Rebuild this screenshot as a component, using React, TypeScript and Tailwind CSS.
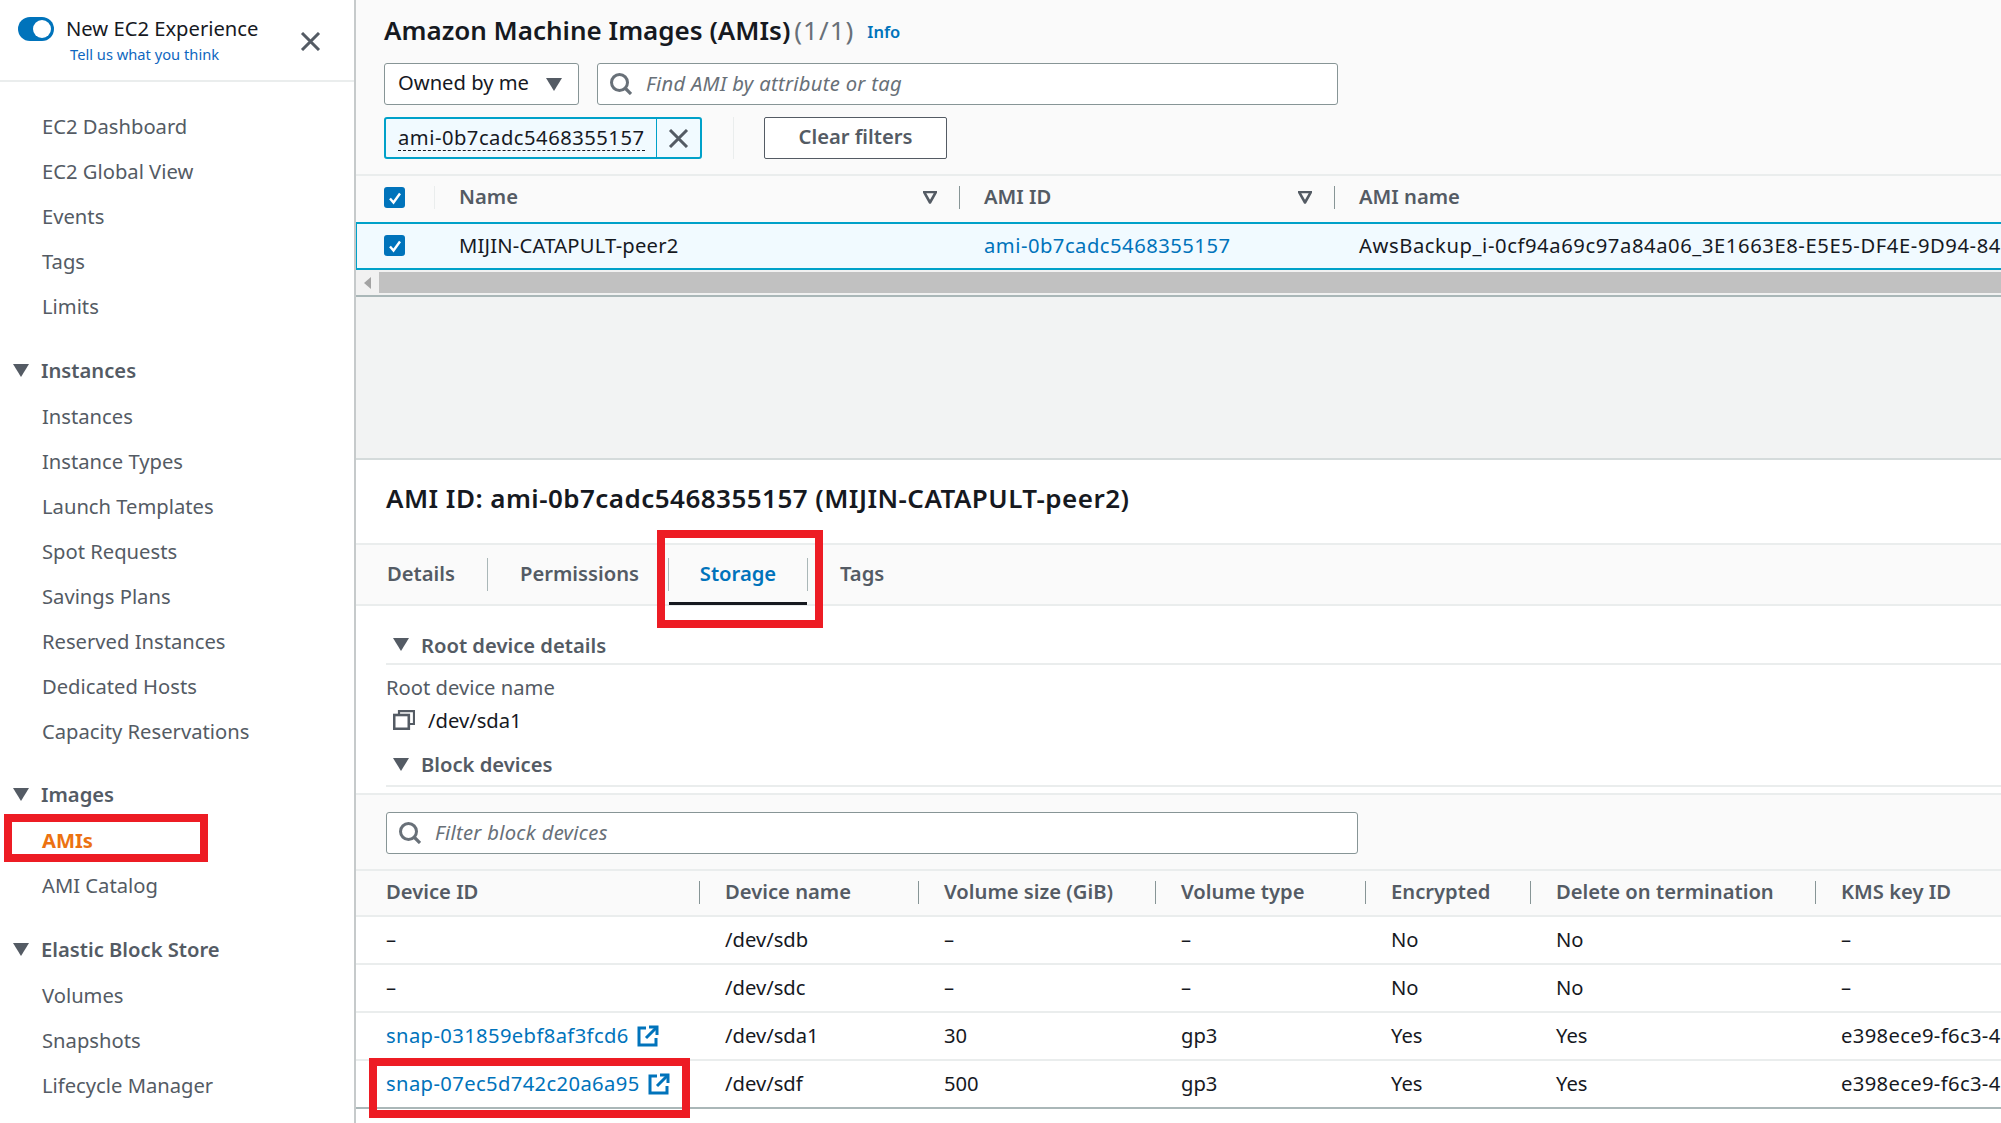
import React from "react";

const Tri = ({ className = "" }: { className?: string }) => (
  <svg viewBox="0 0 16 13" className={`w-4 h-[13px] shrink-0 ${className}`}>
    <path d="M0 0H16L8 13Z" fill="#545b64" />
  </svg>
);

const SortTri = () => (
  <svg viewBox="0 0 14 13" className="w-[14px] h-[13px] shrink-0">
    <path d="M1 1H13L7 11.5Z" fill="none" stroke="#545b64" strokeWidth="2.6" strokeLinejoin="round" />
  </svg>
);

const Search = ({ className = "" }: { className?: string }) => (
  <svg viewBox="0 0 22 22" className={`w-[22px] h-[22px] shrink-0 ${className}`}>
    <circle cx="9.5" cy="9.5" r="8" fill="none" stroke="#687078" strokeWidth="3" />
    <path d="M15 15L21 21" stroke="#687078" strokeWidth="3.2" />
  </svg>
);

const Close = ({ color = "#545b64", className = "" }: { color?: string; className?: string }) => (
  <svg viewBox="0 0 21 19" className={`w-[21px] h-[19px] shrink-0 ${className}`}>
    <path d="M2 1L19 18M19 1L2 18" stroke={color} strokeWidth="3" />
  </svg>
);

const Check = () => (
  <span className="w-[21px] h-[21px] rounded-[3px] bg-[#0073bb] flex items-center justify-center shrink-0">
    <svg viewBox="0 0 14 14" className="w-[14px] h-[14px]">
      <path d="M2 7.5L5.5 11.5L12 2.5" fill="none" stroke="#fff" strokeWidth="2.4" />
    </svg>
  </span>
);

const External = () => (
  <svg viewBox="0 0 22 22" className="w-[22px] h-[22px] shrink-0">
    <path d="M9 3H2V20H19V13" fill="none" stroke="#0073bb" strokeWidth="3" />
    <path d="M12 2H20V10" fill="none" stroke="#0073bb" strokeWidth="3" />
    <path d="M19.5 2.5L9 13" fill="none" stroke="#0073bb" strokeWidth="3" />
  </svg>
);

const Copy = () => (
  <svg viewBox="0 0 22 20" className="w-[22px] h-[20px] shrink-0">
    <path d="M6 5V1.2H21V14H16" fill="none" stroke="#545b64" strokeWidth="2.2" />
    <rect x="1.2" y="5" width="14.6" height="13.8" fill="none" stroke="#545b64" strokeWidth="2.6" />
  </svg>
);

const RedBox = ({ className }: { className: string }) => (
  <div className={`absolute border-[8px] border-[#ed1c24] pointer-events-none ${className}`} />
);

const NavItem = ({ label, active }: { label: string; active?: boolean }) => (
  <div
    className={`h-[45px] flex items-center pl-[42px] ${
      active ? "text-[#ec7211] font-bold" : "text-[#545b64]"
    }`}
  >
    {label}
  </div>
);

const NavHead = ({ label }: { label: string }) => (
  <div className="h-[46px] flex items-center pl-[13px] gap-3 font-semibold text-[#545b64]">
    <Tri />
    <span>{label}</span>
  </div>
);

const blockCols = "grid grid-cols-[313px_219px_237px_210px_165px_285px_1fr]";

const blockRows = [
  ["–", "/dev/sdb", "–", "–", "No", "No", "–"],
  ["–", "/dev/sdc", "–", "–", "No", "No", "–"],
  ["snap-031859ebf8af3fcd6", "/dev/sda1", "30", "gp3", "Yes", "Yes", "e398ece9-f6c3-4"],
  ["snap-07ec5d742c20a6a95", "/dev/sdf", "500", "gp3", "Yes", "Yes", "e398ece9-f6c3-4"],
];

const blockHead = ["Device ID", "Device name", "Volume size (GiB)", "Volume type", "Encrypted", "Delete on termination", "KMS key ID"];

export default function App() {
  return (
    <div className="w-[2001px] h-[1123px] flex overflow-hidden bg-white font-['Noto_Sans',sans-serif] text-[20.2px] leading-[28px] text-[#16191f]">
      {/* sidebar */}
      <aside className="w-[356px] shrink-0 border-r-2 border-[#c6cacb] bg-white">
        <div className="h-[82px] border-b-2 border-[#eaeded] flex items-start pl-[18px] pr-[33px]">
          <div className="w-9 h-6 mt-[17px] rounded-full bg-[#0073bb] flex items-center justify-end pr-[3px] shrink-0">
            <span className="w-[18px] h-[18px] rounded-full bg-white" />
          </div>
          <div className="ml-3 flex-1 flex flex-col">
            <span className="mt-[14px]">New EC2 Experience</span>
            <span className="mt-[2px] ml-1 text-[14.7px] leading-[20px] text-[#0f67c0]">Tell us what you think</span>
          </div>
          <Close className="mt-[32px]" />
        </div>
        <nav className="pt-[21px]">
          {["EC2 Dashboard", "EC2 Global View", "Events", "Tags", "Limits"].map((l) => (
            <NavItem key={l} label={l} />
          ))}
          <div className="h-[19px]" />
          <NavHead label="Instances" />
          {["Instances", "Instance Types", "Launch Templates", "Spot Requests", "Savings Plans", "Reserved Instances", "Dedicated Hosts", "Capacity Reservations"].map((l) => (
            <NavItem key={l} label={l} />
          ))}
          <div className="h-[18px]" />
          <NavHead label="Images" />
          <div className="relative">
            <NavItem label="AMIs" active />
            <RedBox className="left-1 top-[-3px] w-[204px] h-[48px]" />
          </div>
          <NavItem label="AMI Catalog" />
          <div className="h-[19px]" />
          <NavHead label="Elastic Block Store" />
          {["Volumes", "Snapshots", "Lifecycle Manager"].map((l) => (
            <NavItem key={l} label={l} />
          ))}
        </nav>
      </aside>

      {/* main */}
      <main className="flex-1 min-w-0 overflow-hidden flex flex-col whitespace-nowrap">
        {/* filter header */}
        <section className="h-[174px] bg-[#fafafa] pl-7 pt-[13px]">
          <div className="h-[34px] flex items-center">
            <h1 className="text-[26px] font-semibold">Amazon Machine Images (AMIs)</h1>
            <span className="ml-1 text-[26px] tracking-[1px] text-[#687078]">(1/1)</span>
            <span className="ml-[13px] mt-1 text-[16.5px] font-semibold text-[#0073bb]">Info</span>
          </div>
          <div className="mt-[16px] flex gap-[18px]">
            <div className="w-[195px] h-[42px] bg-white border border-[#879596] rounded-[3px] flex items-center pl-[13px] pr-4 justify-between">
              <span className="-mt-[4px]">Owned by me</span>
              <Tri />
            </div>
            <div className="w-[741px] h-[42px] bg-white border border-[#879596] rounded-[3px] flex items-center pl-3 gap-[14px]">
              <Search />
              <span className="-mt-[2px] italic tracking-[0.3px] text-[#687078]">Find AMI by attribute or tag</span>
            </div>
          </div>
          <div className="mt-3 flex items-center">
            <div className="w-[318px] h-[42px] bg-[#f1faff] border-2 border-[#00a1c9] rounded-[3px] flex items-center">
              <span className="w-[270px] pl-3 h-full flex items-center pb-[2px]">
                <span className="border-b border-dashed border-[#16191f] leading-[26px] tracking-[0.5px]">ami-0b7cadc5468355157</span>
              </span>
              <span className="flex-1 h-full border-l border-[#00a1c9] flex items-center justify-center">
                <Close />
              </span>
            </div>
            <div className="w-px h-[42px] bg-[#eaeded] ml-[31px]" />
            <div className="ml-[30px] w-[183px] h-[42px] bg-white border border-[#545b64] rounded-[2px] flex items-center justify-center pb-[4px] font-semibold text-[#545b64]">
              Clear filters
            </div>
          </div>
        </section>

        {/* AMI table */}
        <div className="h-[48px] bg-[#fafafa] border-t-2 border-[#eaeded] pl-7 pb-[3px] grid grid-cols-[50px_525px_375px_1fr] items-center font-semibold text-[#545b64]">
          <Check />
          <div className="h-[23px] border-l border-[#eaeded] pl-[24px] pr-[22px] flex items-center justify-between">
            <span className="-mt-[4px]">Name</span>
            <SortTri />
          </div>
          <div className="h-[23px] border-l border-[#879596] pl-6 pr-[22px] flex items-center justify-between">
            <span className="-mt-[4px]">AMI ID</span>
            <SortTri />
          </div>
          <div className="h-[23px] border-l border-[#879596] pl-6 flex items-center">
            <span className="-mt-[4px]">AMI name</span>
          </div>
        </div>
        <div className="h-[48px] bg-[#f1faff] border-y-2 border-l-2 border-[#00a1c9] -ml-px pl-[27px] pb-px grid grid-cols-[50px_525px_375px_1fr] items-center">
          <Check />
          <div className="-mt-[2px] pl-[25px] tracking-[0.2px]">MIJIN-CATAPULT-peer2</div>
          <div className="-mt-[2px] pl-[25px] tracking-[0.5px] text-[#0073bb]">ami-0b7cadc5468355157</div>
          <div className="-mt-[2px] pl-[25px] tracking-[0.59px]">AwsBackup_i-0cf94a69c97a84a06_3E1663E8-E5E5-DF4E-9D94-84</div>
        </div>
        <div className="h-[27px] bg-[#f1f1f1] border-b-2 border-[#aab7b8] pt-[2px] flex">
          <div className="w-[23px] h-[21px] flex items-center justify-center">
            <svg viewBox="0 0 8 12" className="w-2 h-3">
              <path d="M7 0V12L0 6Z" fill="#a3a3a3" />
            </svg>
          </div>
          <div className="flex-1 h-[21px] bg-[#c1c1c1]" />
        </div>

        {/* empty split area */}
        <div className="h-[161px] bg-[#f2f3f3]" />

        {/* details */}
        <section className="flex-1 border-t-2 border-[#d5dbdb] bg-white">
          <div className="h-[83px] flex items-center pl-[30px] pb-[7px]">
            <h2 className="text-[26px] tracking-[0.46px] font-semibold">AMI ID: ami-0b7cadc5468355157 (MIJIN-CATAPULT-peer2)</h2>
          </div>
          <div className="h-[63px] bg-[#fafafa] border-y-2 border-[#eaeded] flex items-center pl-[31px] pb-px font-semibold text-[#545b64]">
            <span className="-mt-[2px] w-[100px]">Details</span>
            <span className="w-px h-[33px] bg-[#aab7b8]" />
            <span className="-mt-[2px] pl-8 w-[180px]">Permissions</span>
            <span className="w-px h-[33px] bg-[#aab7b8]" />
            <div className="relative w-[138px] self-stretch -mb-px flex items-center justify-center pb-[3px] text-[#0073bb]">
              Storage
              <span className="absolute left-0 right-0 bottom-[-1px] h-[3px] bg-[#16191f]" />
              <RedBox className="left-[-12px] top-[-15px] w-[166px] h-[98px]" />
            </div>
            <span className="w-px h-[33px] bg-[#aab7b8]" />
            <span className="-mt-[2px] pl-8">Tags</span>
          </div>
          <div className="h-[187px] pl-[30px]">
            <div className="h-[59px] pt-[20px] border-b-2 border-[#eaeded] flex items-center pl-[7px] gap-3 font-semibold text-[#545b64]">
              <Tri />
              <span>Root device details</span>
            </div>
            <div className="mt-[8px] text-[#545b64]">Root device name</div>
            <div className="mt-[5px] h-7 flex items-center pl-[7px] gap-[13px]">
              <Copy />
              <span>/dev/sda1</span>
            </div>
            <div className="mt-[16px] h-7 flex items-center pl-[7px] gap-3 font-semibold text-[#545b64]">
              <Tri />
              <span>Block devices</span>
            </div>
            <div className="mt-[7px] border-b-2 border-[#eaeded]" />
          </div>
          <div className="h-[76px] bg-[#fafafa] border-t-2 border-[#eaeded] pl-[30px] pt-[17px]">
            <div className="w-[972px] h-[42px] bg-white border border-[#879596] rounded-[3px] flex items-center pl-3 gap-[14px]">
              <Search />
              <span className="-mt-[2px] italic tracking-[0.3px] text-[#687078]">Filter block devices</span>
            </div>
          </div>
          <div className={`${blockCols} h-[48px] bg-[#fafafa] border-y-2 border-[#eaeded] pl-[30px] pb-[2px] items-center font-semibold text-[#545b64]`}>
            {blockHead.map((h, i) => (
              <div key={h} className={`h-[23px] flex items-center ${i > 0 ? "border-l border-[#879596] pl-[25px]" : ""}`}>
                <span className="-mt-[2px]">{h}</span>
              </div>
            ))}
          </div>
          {blockRows.map((row, r) => (
            <div
              key={r}
              className={`${blockCols} h-[48px] pl-[30px] items-center border-b-2 ${
                r === 3 ? "border-[#aab7b8] relative" : "border-[#eaeded]"
              }`}
            >
              {row.map((c, i) => (
                <div key={i} className={i > 0 ? "pl-[26px]" : ""}>
                  {i === 0 && r >= 2 ? (
                    <span className="flex items-center gap-[8px] tracking-[0.38px] text-[#0073bb]">
                      <span className="-mt-[2px]">{c}</span>
                      <External />
                    </span>
                  ) : (
                    <span className={`block -mt-[2px] ${i === 6 ? "tracking-[0.35px]" : ""}`}>{c}</span>
                  )}
                </div>
              ))}
              {r === 3 && <RedBox className="left-[13px] top-[-3px] w-[321px] h-[60px]" />}
            </div>
          ))}
        </section>
      </main>
    </div>
  );
}
